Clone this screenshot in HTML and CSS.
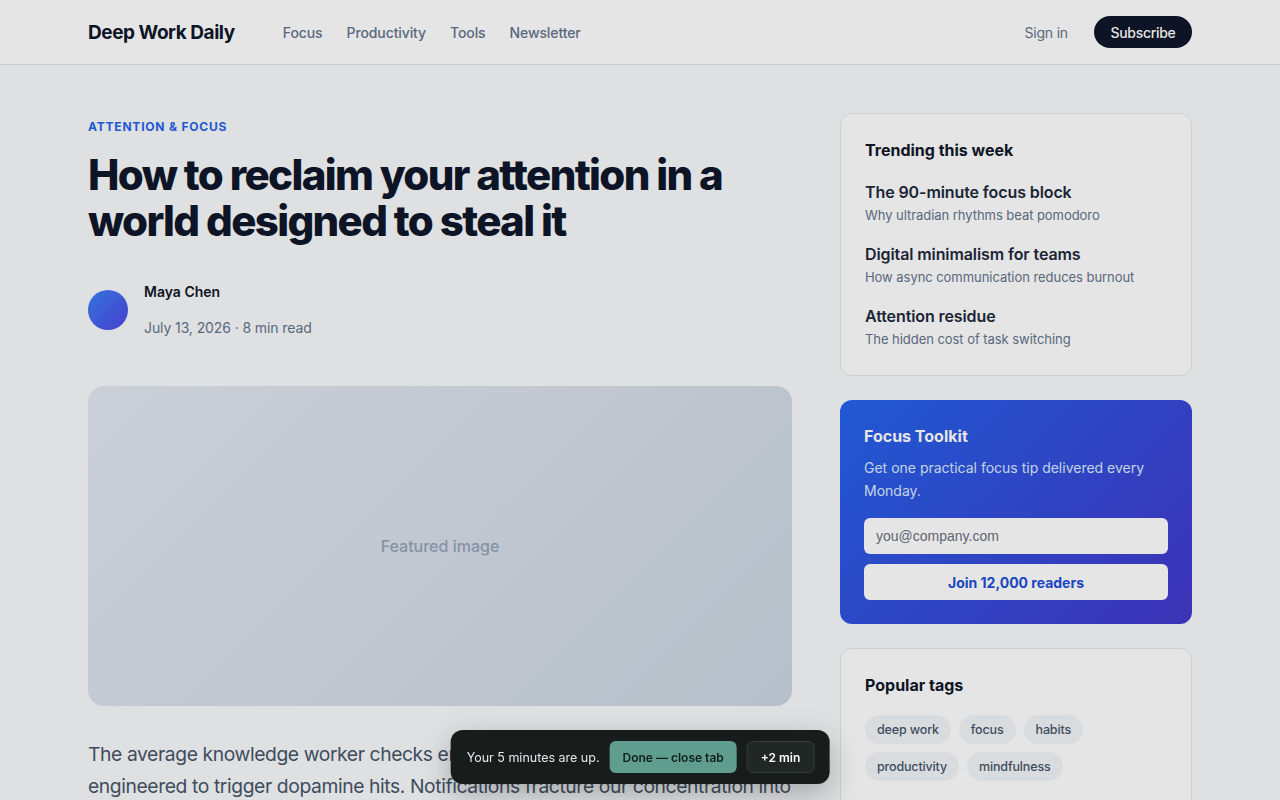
FILE: index.html
```html
<!DOCTYPE html>
<html lang="en">
<head>
    <meta charset="UTF-8">
    <meta name="viewport" content="width=device-width, initial-scale=1.0">
    <title>Deep Work Daily</title>
    <link rel="stylesheet" href="styles.css">
</head>
<body>

<header class="topbar">
    <div class="wrap topbar_inner">
        <a class="logo" href="#">Deep Work Daily</a>
        <nav class="nav">
            <a href="#">Focus</a>
            <a href="#">Productivity</a>
            <a href="#">Tools</a>
            <a href="#">Newsletter</a>
        </nav>
        <div class="actions">
            <a class="signin" href="#">Sign in</a>
            <button class="subscribe">Subscribe</button>
        </div>
    </div>
</header>

<div class="wrap layout">
    <main class="article">
        <div class="kicker">ATTENTION &amp; FOCUS</div>
        <h1 class="title">How to reclaim your attention in a world designed to steal it</h1>

        <div class="author">
            <div class="avatar"></div>
            <div class="author_text">
                <div class="author_name">Maya Chen</div>
                <div class="author_meta">July 13, 2026 · 8 min read</div>
            </div>
        </div>

        <div class="featured">Featured image</div>

        <p class="lead">The average knowledge worker checks email every six minutes, in apps
            engineered to trigger dopamine hits. Notifications fracture our concentration into
            tiny pieces that rarely come back together.</p>
    </main>

    <aside class="sidebar">
        <div class="card">
            <h3 class="card_title">Trending this week</h3>
            <div class="trend">
                <div class="trend_title">The 90-minute focus block</div>
                <div class="trend_sub">Why ultradian rhythms beat pomodoro</div>
            </div>
            <div class="trend">
                <div class="trend_title">Digital minimalism for teams</div>
                <div class="trend_sub">How async communication reduces burnout</div>
            </div>
            <div class="trend">
                <div class="trend_title">Attention residue</div>
                <div class="trend_sub">The hidden cost of task switching</div>
            </div>
        </div>

        <div class="card promo">
            <h3 class="card_title">Focus Toolkit</h3>
            <p class="promo_text">Get one practical focus tip delivered every Monday.</p>
            <input class="promo_input" type="text" placeholder="you@company.com">
            <button class="promo_btn">Join 12,000 readers</button>
        </div>

        <div class="card">
            <h3 class="card_title">Popular tags</h3>
            <div class="tags">
                <span class="tag">deep work</span>
                <span class="tag">focus</span>
                <span class="tag">habits</span>
                <span class="tag">productivity</span>
                <span class="tag">mindfulness</span>
            </div>
        </div>
    </aside>
</div>

<!-- dim layer + timer toast -->
<div class="dim"></div>
<div class="toast">
    <span class="toast_text">Your 5 minutes are up.</span>
    <button class="toast_done">Done — close tab</button>
    <button class="toast_more">+2 min</button>
</div>

</body>
</html>
```

FILE: styles.css
```css
*{
    box-sizing: border-box;
}
body{
    margin: 0;
    background-color: #f8fafc;
    font-family: Inter, "Noto Sans", sans-serif;
    color: #0f172a;
}
a{
    text-decoration: none;
    color: inherit;
}
.wrap{
    width: 1104px;
    margin: 0 auto;
}

/* header */
.topbar{
    background-color: #fff;
    border-bottom: 1px solid #dde3ec;
    height: 65px;
}
.topbar_inner{
    display: flex;
    align-items: center;
    height: 64px;
}
.logo{
    font-size: 19px;
    font-weight: 700;
    letter-spacing: -0.45px;
    color: #0f172a;
}
.nav{
    display: flex;
    gap: 24px;
    margin-left: 48px;
}
.nav a{
    font-size: 14px;
    font-weight: 500;
    color: #64748b;
    letter-spacing: -0.1px;
}
.actions{
    margin-left: auto;
    display: flex;
    align-items: center;
    gap: 26px;
}
.signin{
    font-size: 14px;
    color: #64748b;
    letter-spacing: -0.2px;
}
.subscribe{
    background-color: #0f172a;
    color: #fff;
    border: none;
    border-radius: 999px;
    height: 32px;
    padding: 0 16.5px;
    font-family: inherit;
    font-size: 14px;
    font-weight: 500;
    letter-spacing: -0.3px;
}

/* main layout */
.layout{
    display: grid;
    grid-template-columns: 704px 352px;
    gap: 48px;
    padding-top: 48px;
}

.kicker{
    color: #2563eb;
    font-size: 12px;
    font-weight: 700;
    letter-spacing: 0.8px;
    margin-top: 6px;
}
.title{
    font-size: 42px;
    font-weight: 800;
    letter-spacing: -1.65px;
    line-height: 46px;
    margin: 18px 0 0;
    color: #0f172a;
}
.author{
    display: flex;
    align-items: center;
    gap: 16px;
    margin-top: 38px;
}
.avatar{
    width: 40px;
    height: 40px;
    border-radius: 50%;
    background: linear-gradient(135deg, #3b82f6, #4f46e5);
}
.author_name{
    font-size: 14px;
    font-weight: 600;
    color: #0f172a;
    line-height: 20px;
}
.author_meta{
    font-size: 14px;
    color: #64748b;
    margin-top: 16px;
    line-height: 20px;
    letter-spacing: -0.1px;
}
.featured{
    margin-top: 48px;
    height: 320px;
    border-radius: 16px;
    background: linear-gradient(135deg, #e2e8f0, #cbd5e1);
    display: flex;
    align-items: center;
    justify-content: center;
    color: #94a3b8;
    font-size: 16px;
    font-weight: 500;
}
.lead{
    margin: 32px 0 0;
    font-size: 19.3px;
    line-height: 32px;
    color: #475569;
    letter-spacing: -0.4px;
}

/* sidebar */
.sidebar{
    display: flex;
    flex-direction: column;
    gap: 24px;
}
.card{
    background-color: #fff;
    border: 1px solid #e2e8f0;
    border-radius: 12px;
    padding: 24px 24px 27px;
}
.card_title{
    margin: 2px 0 0;
    font-size: 16px;
    line-height: 20px;
    font-weight: 700;
    color: #0f172a;
}
.trend{
    margin-top: 21px;
}
.trend + .trend{
    margin-top: 19px;
}
.trend_title{
    font-size: 16px;
    font-weight: 600;
    color: #1e293b;
    line-height: 22px;
    letter-spacing: -0.1px;
}
.trend_sub{
    font-size: 13px;
    color: #64748b;
    margin-top: 3px;
    line-height: 18px;
    letter-spacing: -0.05px;
}

.promo{
    border: none;
    background: linear-gradient(135deg, #2563eb, #4338ca);
    padding: 24px 24px 24px;
}
.promo .card_title{
    color: #fff;
    margin-top: 2px;
}
.promo_text{
    margin: 10px 0 0;
    font-size: 14px;
    line-height: 23px;
    color: #dbeafe;
}
.promo_input{
    display: block;
    width: 100%;
    height: 36px;
    margin-top: 16px;
    border: none;
    border-radius: 6px;
    padding: 0 12px;
    font-family: "Liberation Sans", Arial, sans-serif;
    font-size: 14px;
    background-color: #fff;
}
.promo_input::placeholder{
    color: #6b7280;
}
.promo_btn{
    display: block;
    width: 100%;
    height: 36px;
    margin-top: 10px;
    border: none;
    border-radius: 6px;
    background-color: #fff;
    color: #1d4ed8;
    font-family: inherit;
    font-size: 14px;
    font-weight: 700;
}

.tags{
    display: flex;
    flex-wrap: wrap;
    gap: 8px;
    margin-top: 20px;
}
.tag{
    background-color: #f1f5f9;
    color: #475569;
    font-size: 12.5px;
    font-weight: 500;
    border-radius: 999px;
    padding: 0 12px;
    height: 29px;
    line-height: 29px;
    letter-spacing: -0.15px;
}

/* overlay */
.dim{
    position: fixed;
    inset: 0;
    background-color: rgba(0, 0, 0, 0.1);
    z-index: 10;
}
.toast{
    position: fixed;
    bottom: 16px;
    left: 50%;
    transform: translateX(-50%);
    z-index: 20;
    display: flex;
    align-items: center;
    gap: 10px;
    background-color: #181d1b;
    border-radius: 12px;
    padding: 11px 15px 11px 16px;
    box-shadow: 0 10px 30px rgba(0, 0, 0, 0.25);
    white-space: nowrap;
}
.toast_text{
    color: #e5e7eb;
    font-size: 12.5px;
}
.toast_done{
    background-color: #5f9e8e;
    color: #0f1f1a;
    border: none;
    border-radius: 6px;
    height: 32px;
    padding: 0 13px;
    font-family: inherit;
    font-size: 12px;
    font-weight: 600;
}
.toast_more{
    background-color: #212725;
    color: #fff;
    border: 1px solid #343b38;
    border-radius: 6px;
    height: 32px;
    padding: 0 13px;
    font-family: inherit;
    font-size: 12px;
    font-weight: 600;
}
```
